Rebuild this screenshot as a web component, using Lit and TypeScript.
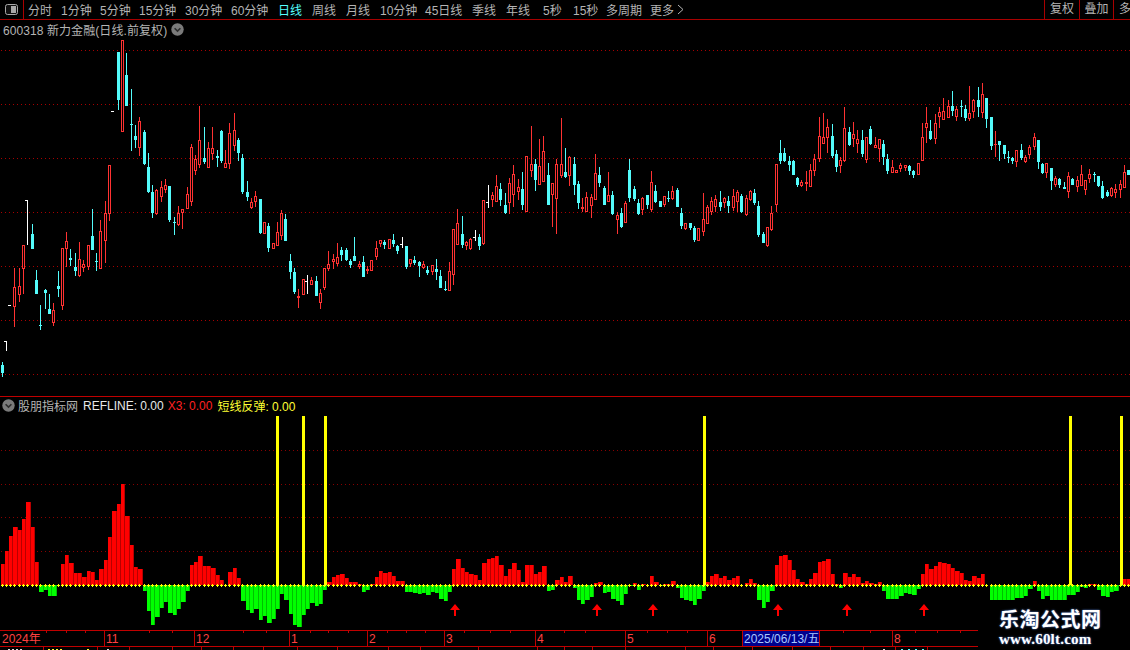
import { LitElement, html, css, svg } from "lit";
import { customElement } from "lit/decorators.js";

const CANDLES = `c 362 365 373 377
w 341 341 351 351
w 305 305 305 305
r 268 287 307 327
r 268 286 295 302
r 245 245 269 294
w 200 200 245 245
c 224 234 249 249
c 270 280 294 294
c 305 325 325 330
c 289 290 293 309
c 294 309 314 314
r 303 310 323 326
c 271 286 289 297
r 248 248 306 310
r 232 241 249 267
c 249 258 260 266
c 253 267 271 276
r 242 259 276 277
r 260 264 268 272
r 245 245 267 270
c 209 236 250 250
c 253 261 261 271
r 220 231 269 269
r 201 213 241 263
r 165 165 214 221
w 111 111 111 111
c 52 52 100 110
r 40 40 132 132
c 53 75 106 106
c 89 124 124 151
c 125 136 140 148
r 117 121 148 156
c 130 132 164 165
c 153 167 192 193
c 185 192 213 218
r 189 190 214 215
r 181 187 197 202
r 179 185 190 193
c 186 186 220 222
c 217 222 222 235
r 206 213 225 226
r 209 209 213 229
r 187 194 209 209
r 144 147 202 206
r 155 159 171 175
r 106 140 165 168
c 127 158 162 164
r 142 148 168 168
r 127 148 154 160
c 150 156 158 167
c 130 131 161 163
r 150 163 168 168
r 123 133 164 169
r 113 130 146 151
c 138 140 153 161
c 154 158 192 194
c 181 192 197 201
r 198 202 208 209
r 191 196 202 207
c 199 199 233 234
r 222 222 234 234
c 223 226 248 252
r 243 243 249 249
r 222 232 246 246
r 210 213 236 240
c 214 219 241 241
c 254 261 272 279
c 268 272 292 294
r 289 296 298 308
r 279 279 295 295
w 275 281 294 294
r 277 280 285 285
c 276 281 296 296
r 289 293 303 309
r 268 268 288 290
r 251 264 269 271
r 254 259 262 269
r 243 257 264 266
c 247 250 255 261
c 248 250 260 261
c 259 261 265 268
c 237 256 261 261
r 261 264 267 269
c 256 262 277 277
r 266 269 271 274
r 260 260 271 271
r 241 248 257 260
r 240 240 244 247
c 240 242 245 249
r 239 239 249 249
c 234 240 244 247
c 245 246 251 254
w 237 244 248 248
c 246 246 267 269
r 259 259 264 267
c 256 260 263 265
c 261 262 266 277
r 261 264 268 269
c 266 270 273 275
r 265 265 272 275
c 259 269 272 280
c 270 276 288 288
c 281 289 289 291
r 262 271 291 291
r 229 229 275 285
r 209 223 245 245
c 216 234 245 248
r 241 242 246 250
r 238 239 249 250
w 230 237 241 241
c 234 237 246 250
r 200 200 244 245
w 185 202 208 208
r 192 195 200 207
r 175 186 202 202
c 183 189 200 206
c 193 205 213 214
r 178 183 203 214
r 165 174 195 207
r 179 187 192 200
c 172 189 205 210
r 156 156 212 212
r 126 164 171 177
c 159 164 180 191
r 139 166 185 185
r 136 151 182 182
c 163 175 205 205
r 183 183 195 227
r 159 164 199 234
r 118 164 176 178
c 148 172 177 178
r 156 157 176 186
c 157 164 185 195
c 181 184 203 209
r 198 207 209 212
r 192 197 212 212
r 194 197 206 218
r 154 173 200 200
c 167 175 183 187
c 186 188 205 205
r 172 195 202 202
c 191 195 214 215
r 212 215 220 234
c 208 213 227 228
r 201 203 223 223
c 159 170 198 202
c 186 189 199 201
c 199 203 214 215
r 197 198 210 215
c 195 195 205 209
r 171 182 210 212
c 185 191 202 203
c 201 201 207 207
r 196 196 205 207
c 191 198 198 202
r 186 191 199 200
c 188 190 207 207
c 208 213 226 229
r 223 223 229 230
c 223 223 228 230
c 226 228 240 242
r 228 228 241 241
r 193 219 232 236
r 205 207 224 224
r 197 201 212 215
r 195 199 207 212
c 191 202 207 211
r 197 198 203 208
c 196 201 206 213
r 189 196 208 211
r 190 192 202 212
c 194 196 212 213
r 195 198 215 216
r 190 191 200 201
c 189 193 203 205
c 201 206 235 237
c 232 234 243 243
r 227 227 246 247
r 206 213 230 231
r 164 164 205 212
c 140 153 161 164
c 148 153 161 162
c 156 161 165 171
c 160 161 175 175
c 177 178 185 187
r 180 182 186 187
r 171 182 184 191
r 164 170 187 187
r 154 159 171 176
r 117 136 159 162
r 113 137 144 144
r 119 127 138 153
c 124 136 156 158
c 150 154 167 172
r 157 160 166 173
r 107 128 161 162
c 127 132 145 146
r 122 134 139 147
r 130 139 144 153
c 130 140 154 157
r 137 137 160 163
c 126 129 144 145
r 137 145 148 148
r 139 139 149 162
c 140 144 157 165
c 154 159 171 174
r 160 167 173 173
r 170 170 173 173
r 163 165 169 172
r 165 165 168 171
c 165 166 171 175
c 170 171 175 178
r 163 163 175 175
r 123 137 161 161
r 107 123 128 143
c 120 131 139 140
r 114 123 139 144
r 107 112 117 128
r 98 111 120 120
r 100 106 118 118
c 91 106 111 116
r 106 109 117 121
c 100 106 106 117
c 105 109 118 121
r 86 113 119 121
r 99 100 112 118
c 87 100 107 117
r 83 94 113 118
c 98 98 119 128
c 117 117 146 150
r 131 144 144 157
c 141 141 145 161
c 145 145 154 159
c 151 157 157 163
c 157 158 161 164
r 150 150 162 167
c 144 150 158 160
r 155 157 162 163
r 145 147 155 159
r 133 137 147 150
c 140 140 162 169
c 163 164 173 174
r 163 163 173 178
c 168 168 181 190
r 176 178 185 187
c 178 179 185 188
c 182 187 189 189
r 172 176 192 198
c 178 179 185 185
r 176 180 187 192
r 165 174 186 186
r 180 180 190 195
r 169 174 179 183
c 172 174 174 182
c 176 176 186 187
c 181 186 198 199
c 190 192 196 197
r 187 188 196 197
r 184 189 193 198
r 180 184 190 198
r 165 172 188 188
c 170 170 175 175`
  .split("\n")
  .map((l) => {
    const p = l.trim().split(" ");
    return { t: p[0], h: +p[1], a: +p[2], b: +p[3], l: +p[4] };
  });

const BARS = [
  21,34,49,58,55,66,83,58,23,-7,-5,-11,-11,0,
  21,30,22,12,12,8,14,13,5,16,25,48,74,81,101,69,40,18,16,
  -6,-26,-40,-32,-23,-17,-28,-30,-24,-17,-6,
  20,23,29,19,19,17,10,5,0,13,17,7,
  -16,-25,-28,-24,-35,-31,-38,-34,-24,-9,-15,-29,-40,-42,-30,-24,-18,-21,-19,-5,
  3,8,10,11,7,3,3,1,-7,-5,1,8,14,12,13,9,4,4,
  -7,-7,-8,-9,-8,-10,-7,-8,-14,-16,-7,
  16,26,17,13,11,10,5,22,26,27,29,20,9,16,22,15,3,20,20,11,13,19,
  -6,-5,5,8,3,9,-3,-15,-19,-15,-12,2,3,
  -8,-7,-14,-16,-20,-9,-1,2,-5,1,0,9,3,-1,1,1,4,
  -3,-13,-15,-16,-20,-14,-6,
  3,9,11,7,9,5,7,9,0,2,6,2,-15,-23,-17,-6,
  20,29,30,25,15,6,3,1,6,12,23,24,26,11,1,-3,
  12,8,11,8,2,4,2,1,3,-6,-14,-14,-14,-11,-8,-9,-10,-4,
  11,21,16,19,23,22,21,17,14,12,5,4,9,7,11,0,
  -15,-15,-15,-15,-15,-15,-13,-13,-11,-4,4,-6,-14,-11,-15,-15,-15,-15,-10,-10,-7,-2,-3,1,1,-5,-11,-12,-7,-6,-1,6,6,
];

const BASE = 585;
const xOf = (i: number) => Math.floor(2.1 + 4.3 * i);

const TABS: [string, number, string][] = [
  ["分时", 33, ""], ["1分钟", 39, ""], ["5分钟", 39, ""], ["15分钟", 46, ""], ["30分钟", 46, ""], ["60分钟", 47, ""],
  ["日线", 34, "on"], ["周线", 34, ""], ["月线", 34, ""], ["10分钟", 45, ""], ["45日线", 47, ""], ["季线", 34, ""], ["年线", 37, ""],
  ["5秒", 30, ""], ["15秒", 33, ""], ["多周期", 44, ""],
];

const MAIN_GRID = [50, 104, 158, 212, 266, 320, 374];
const IND_GRID = [450, 484, 517, 551];
const YELLOW = [276, 302, 324, 703, 1069, 1120];
const ARROWS = [455, 597, 653, 778, 847, 924];
const MONTHS: [string, number][] = [
  ["2024年", 0],
  ["11", 104],
  ["12", 194],
  ["1", 289],
  ["2", 367],
  ["3", 444],
  ["4", 535],
  ["5", 625],
  ["6", 707],
  ["8", 892],
];
const TICKS = [46,66,85,149,172,243,266,310,328,348,387,406,425,464,490,510,564,585,647,667,687,843,870,915,937,960];
const SEPS = [43,97,129,172,201,233,263,297,337,388,420,478,537,564,592,625,685,713,752,792,830,863,895,927];
const SPECKS: [number, string][] = [
  [8,"#ddd"],[12,"#ddd"],[16,"#ddd"],[20,"#ddd"],
  [48,"#ff3"],[52,"#ff3"],[56,"#ff3"],[60,"#ff3"],[87,"#ff3"],
  [107,"#ddd"],[883,"#ddd"],[901,"#5ff"],[908,"#5ff"],[915,"#5ff"],[922,"#5ff"],
];

@customElement("app-root")
export class AppRoot extends LitElement {
  static styles = css`
    :host {
      display: block;
      width: 1130px;
      height: 650px;
      background: #000;
      overflow: hidden;
      position: relative;
      font-family: "Liberation Sans", "Noto Sans CJK SC", sans-serif;
      font-size: 12px;
      color: #b4b4b4;
    }
    .toolbar {
      display: flex;
      align-items: center;
      height: 19px;
      border-bottom: 1px solid #a80000;
    }
    .toggle {
      display: flex;
      align-items: center;
      justify-content: center;
      width: 23px;
      height: 19px;
      border-right: 1px solid #a80000;
      flex: none;
    }
    .tabs {
      display: flex;
      padding-left: 4px;
      flex: 1;
      white-space: nowrap;
    }
    .tab { flex: none; }
    .tab.on { color: #55ffff; }
    .more { display: inline-flex; align-items: center; gap: 3px; }
    .right { display: flex; height: 19px; flex: none; }
    .rbtn {
      box-sizing: border-box;
      height: 19px;
      border-left: 1px solid #a80000;
      line-height: 19px;
      padding: 0 5px;
      width: 34.5px;
      white-space: nowrap;
      overflow: hidden;
    }
    .rbtn.last { width: 17px; }
    .panel { position: relative; }
    .main { height: 376px; border-bottom: 1px solid #c00000; }
    .ind { height: 233px; }
    svg.chart { display: block; shape-rendering: crispEdges; }
    .title {
      position: absolute;
      left: 3px;
      top: 0;
      display: flex;
      align-items: center;
      height: 18px;
      white-space: nowrap;
      letter-spacing: 0.08px;
    }
    .legend {
      position: absolute;
      left: 2px;
      top: 0;
      display: flex;
      align-items: center;
      height: 17px;
      white-space: nowrap;
    }
    .dot { flex: none; display: block; shape-rendering: auto; }
    .t-dot { margin-left: 4px; }
    .l-name { margin-left: 3px; margin-right: 5px; }
    .white { color: #e8e8e8; margin-right: 4px; }
    .red { color: #ff2020; margin-right: 5px; }
    .yellow { color: #ffff33; }
    .axis {
      width: 978px;
      height: 20px;
      box-sizing: border-box;
      border-top: 1px solid #c00000;
      position: relative;
    }
    .axis-row {
      position: relative;
      height: 15px;
      border-bottom: 1px solid #c00000;
    }
    .mark {
      position: absolute;
      top: 0;
      height: 15px;
      line-height: 16px;
      border-left: 1px solid #c00000;
      padding-left: 1px;
      color: #ff4040;
      white-space: nowrap;
    }
    .mark.first { border-left: none; padding-left: 2px; }
    .tick { position: absolute; top: 0; width: 1px; height: 2px; background: #c00000; }
    .date {
      position: absolute;
      left: 742px;
      top: 0;
      width: 78px;
      height: 15px;
      box-sizing: border-box;
      border-left: 1px solid #c00000;
      border-right: 1px solid #c00000;
      background: #00008c;
      color: #a8c8ff;
      line-height: 16px;
      padding-left: 1px;
      white-space: nowrap;
    }
    .sep { position: absolute; top: 16px; width: 1px; height: 4px; background: #c00000; }
    .speck { position: absolute; top: 18px; width: 2px; height: 1px; }
    .logo {
      position: absolute;
      right: 0;
      bottom: 0;
      width: 152px;
      height: 42px;
      background: #000;
      display: flex;
      flex-direction: column;
      align-items: flex-start;
      padding-left: 21px;
      box-sizing: border-box;
    }
    .logo-a {
      font: bold 20px/24px "Noto Sans CJK SC", sans-serif;
      letter-spacing: 0.5px;
      color: #fff;
      text-shadow: 0 0 2px #5f8fe8;
      margin-top: -1px;
    }
    .logo-b {
      font: bold 15px/17px "Liberation Serif", serif;
      letter-spacing: 0.2px;
      color: #fff;
      text-shadow: 0 0 2px #5f8fe8;
    }
  `;

  private grid(ys: number[], id: string) {
    return ys.map(
      (y) => svg`<rect x="1" y=${y} width="1129" height="1" fill="url(#${id})"></rect>`
    );
  }

  private pattern(id: string, color: string) {
    return svg`<defs><pattern id=${id} x="1" width="4" height="4" patternUnits="userSpaceOnUse">
      <rect width="1" height="4" fill=${color}></rect></pattern></defs>`;
  }

  private candle(c: { t: string; h: number; a: number; b: number; l: number }, i: number) {
    const x = xOf(i);
    if (c.t === "w") {
      return svg`<rect x=${x} y=${c.h} width="1" height=${Math.max(c.l - c.h, 1)} fill="#fff"></rect>
        <rect x=${x - 2} y=${c.a} width="2" height="1" fill="#fff"></rect>`;
    }
    const col = c.t === "c" ? "#54fcfc" : "#ff3232";
    const wick = svg`<rect x=${x} y=${c.h} width="1" height=${Math.max(c.l - c.h, 1)} fill=${col}></rect>`;
    const h = c.b - c.a;
    if (c.t === "c" || h < 2) {
      return svg`${wick}<rect x=${x - 1} y=${c.a} width="3" height=${Math.max(h, 1)} fill=${col}></rect>`;
    }
    return svg`${wick}<rect x=${x - 1} y=${c.a} width="3" height=${h} fill=${col}></rect>
      <rect x=${x} y=${c.a + 1} width="1" height=${h - 2} fill="#000"></rect>`;
  }

  private bar(v: number, i: number) {
    if (!v) return null;
    const x = xOf(i) - 1;
    const step = xOf(i + 1) - xOf(i);
    const y = v > 0 ? BASE - v : BASE;
    const h = Math.abs(v);
    const hi = v > 0 ? "#ff0000" : "#00ff00";
    const lo = v > 0 ? "#b80000" : "#00c000";
    return svg`<rect x=${x} y=${y} width=${step} height=${h} fill=${lo}></rect>
      <rect x=${x} y=${y} width=${step - 1} height=${h} fill=${hi}></rect>`;
  }

  private roundIcon(cls: string) {
    return html`<svg class="dot ${cls}" width="13" height="13" viewBox="0 0 13 13">
      <circle cx="6.5" cy="6.5" r="6.2" fill="#7a7a7a"></circle>
      <path d="M3.6 5.2 L6.5 8.1 L9.4 5.2" fill="none" stroke="#2c2c2c" stroke-width="1.6"></path>
    </svg>`;
  }

  render() {
    return html`
      <div class="toolbar">
        <div class="toggle">
          <svg width="13" height="11" viewBox="0 0 13 11">
            <rect x="0.5" y="0.5" width="12" height="10" rx="2" fill="#111" stroke="#a8a8a8"></rect>
            <rect x="6" y="2" width="5" height="7" fill="#a8a8a8"></rect>
          </svg>
        </div>
        <div class="tabs">
          ${TABS.map(([t, w, c]) => html`<span class="tab ${c}" style="width:${w}px">${t}</span>`)}
          <span class="tab more">更多
            <svg width="7" height="11" viewBox="0 0 7 11"><path d="M1 1 L6 5.5 L1 10" fill="none" stroke="#b4b4b4"></path></svg>
          </span>
        </div>
        <div class="right">
          <span class="rbtn">复权</span>
          <span class="rbtn">叠加</span>
          <span class="rbtn last">多</span>
        </div>
      </div>

      <div class="panel main">
        <svg class="chart" width="1130" height="376" viewBox="0 20 1130 376">
          ${this.pattern("gm", "#a80000")}
          ${this.grid(MAIN_GRID, "gm")}
          ${CANDLES.map((c, i) => this.candle(c, i))}
        </svg>
        <div class="title">
          <span>600318 新力金融(日线.前复权)</span>
          ${this.roundIcon("t-dot")}
        </div>
      </div>

      <div class="panel ind">
        <svg class="chart" width="1130" height="233" viewBox="0 397 1130 233">
          ${this.pattern("gi", "#880000")}
          ${this.grid(IND_GRID, "gi")}
          ${BARS.map((v, i) => this.bar(v, i))}
          ${YELLOW.map((x) => svg`<rect x=${x} y="416" width="3" height="169" fill="#ffff00"></rect>`)}
          ${BARS.map((_, i) => {
            const x = xOf(i);
            return svg`<rect x=${x - 1} y=${BASE} width="3" height="1" fill="#ffff00"></rect>
              <rect x=${x} y=${BASE - 1} width="1" height="3" fill="#ffff00"></rect>`;
          })}
          ${ARROWS.map(
            (x) => svg`<path shape-rendering="auto" d="M${x} 604 L${x + 5} 610 L${x + 1} 610 L${x + 1} 616 L${x - 1} 616 L${x - 1} 610 L${x - 5} 610 Z" fill="#ff0000"></path>`
          )}
        </svg>
        <div class="legend">
          ${this.roundIcon("")}
          <span class="l-name">股朋指标网</span>
          <span class="white">REFLINE: 0.00</span>
          <span class="red">X3: 0.00</span>
          <span class="yellow">短线反弹: 0.00</span>
        </div>
      </div>

      <div class="axis">
        <div class="axis-row">
          ${TICKS.map((x) => html`<i class="tick" style="left:${x}px"></i>`)}
          ${MONTHS.map(
            ([t, sep], i) => html`<span class="mark ${i === 0 ? "first" : ""}" style="left:${sep}px">${t}</span>`
          )}
          <span class="date">2025/06/13/五</span>
        </div>
        ${SEPS.map((x) => html`<i class="sep" style="left:${x}px"></i>`)}
        ${SPECKS.map(([x, c]) => html`<i class="speck" style="left:${x}px;background:${c}"></i>`)}
      </div>

      <div class="logo">
        <div class="logo-a">乐淘公式网</div>
        <div class="logo-b">www.60lt.com</div>
      </div>
    `;
  }
}
